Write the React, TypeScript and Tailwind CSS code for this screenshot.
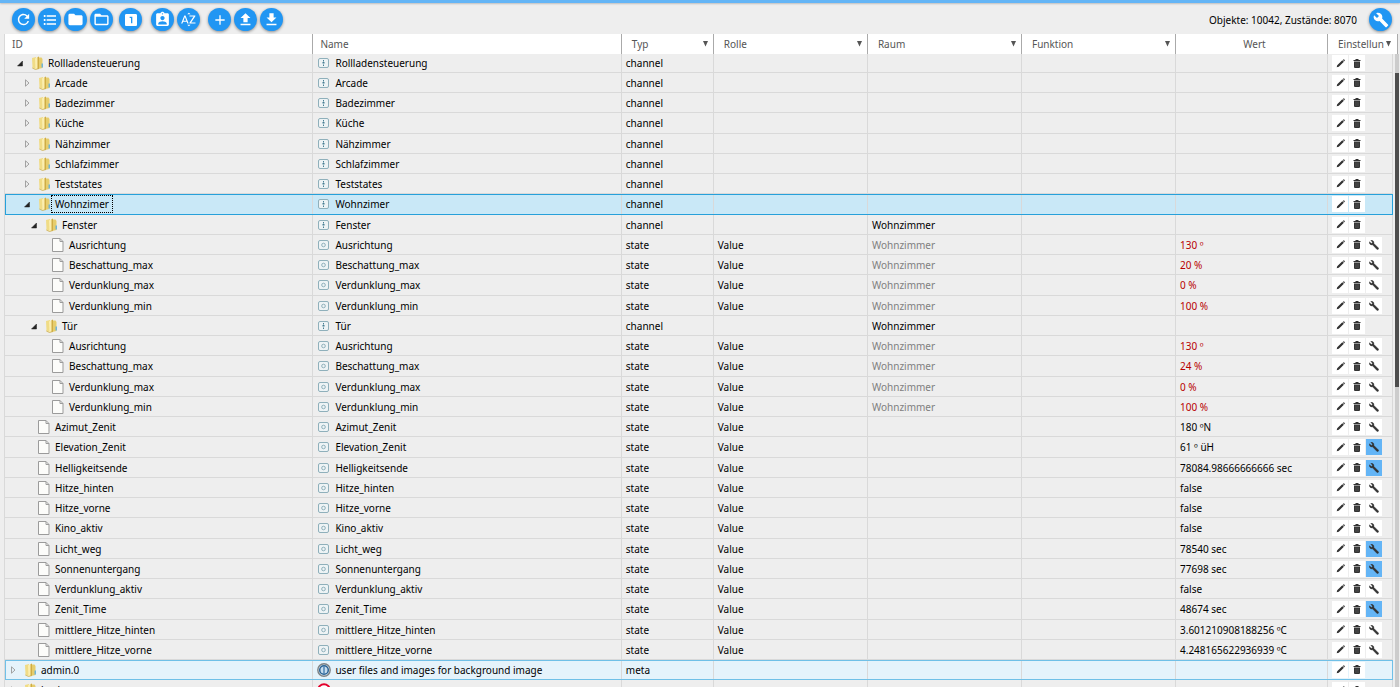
import React from "react";
import {
  MdRefresh, MdFormatListBulleted, MdFolder, MdFolderOpen, MdLooksOne, MdAssignmentInd,
  MdSortByAlpha, MdAdd, MdUpload, MdDownload, MdBuild,
} from "react-icons/md";

type Kind = "channel" | "state" | "meta";
type Row = {
  id: string;
  depth: number;
  kind: Kind;
  open?: boolean;
  folder?: boolean;
  name?: string;
  room?: string;
  value?: string;
  red?: boolean;
  custom?: boolean;
  selected?: boolean;
  hover?: boolean;
};

const channel = (id: string, depth: number, extra: Partial<Row> = {}): Row => ({ id, depth, kind: "channel", folder: true, ...extra });
const state = (id: string, depth: number, value: string, extra: Partial<Row> = {}): Row => ({ id, depth, kind: "state", value, ...extra });
const windowStates = (shade: string): Row[] => [
  state("Ausrichtung", 4, "130 º", { red: true, room: "Wohnzimmer" }),
  state("Beschattung_max", 4, shade, { red: true, room: "Wohnzimmer" }),
  state("Verdunklung_max", 4, "0 %", { red: true, room: "Wohnzimmer" }),
  state("Verdunklung_min", 4, "100 %", { red: true, room: "Wohnzimmer" }),
];

const rows: Row[] = [
  channel("Rollladensteuerung", 1, { open: true }),
  channel("Arcade", 2),
  channel("Badezimmer", 2),
  channel("Küche", 2),
  channel("Nähzimmer", 2),
  channel("Schlafzimmer", 2),
  channel("Teststates", 2),
  channel("Wohnzimer", 2, { open: true, selected: true }),
  channel("Fenster", 3, { open: true, room: "Wohnzimmer" }),
  ...windowStates("20 %"),
  channel("Tür", 3, { open: true, room: "Wohnzimmer" }),
  ...windowStates("24 %"),
  state("Azimut_Zenit", 2, "180 ºN"),
  state("Elevation_Zenit", 2, "61 º üH", { custom: true }),
  state("Helligkeitsende", 2, "78084.98666666666 sec", { custom: true }),
  state("Hitze_hinten", 2, "false"),
  state("Hitze_vorne", 2, "false"),
  state("Kino_aktiv", 2, "false"),
  state("Licht_weg", 2, "78540 sec", { custom: true }),
  state("Sonnenuntergang", 2, "77698 sec", { custom: true }),
  state("Verdunklung_aktiv", 2, "false"),
  state("Zenit_Time", 2, "48674 sec", { custom: true }),
  state("mittlere_Hitze_hinten", 2, "3.601210908188256 ºC"),
  state("mittlere_Hitze_vorne", 2, "4.248165622936939 ºC"),
  { id: "admin.0", depth: 0, kind: "meta", folder: true, name: "user files and images for background image", hover: true },
];

const indent = ["pl-[3px]", "pl-[10px]", "pl-[17px]", "pl-[24px]", "pl-[31px]"];

function FolderIcon() {
  return (
    <svg width="13" height="14" viewBox="0 0 13 14" className="shrink-0" aria-hidden="true">
      <path d="M1 2 5 1v12L1.500 12Z" fill="#f0dc86" />
      <path d="M7 1.500 10.500 1.500 11.500 3v9L7 13Z" fill="#e6cd6c" />
      <path d="M10.500 7.500h1.500v4h-1.500z" fill="#6fb4d8" />
      <path d="M4 2.500 8 .5v12L4.500 13.600Z" fill="#fbeeb0" />
      <path d="M6.500 1.300 8 .5v12L6.500 13Z" fill="#cfac45" />
      <path d="M1.300 12 4.500 13.500 8 12.500" fill="none" stroke="#c9a73e" strokeWidth=".7" />
    </svg>
  );
}

function FileIcon() {
  return (
    <svg width="12" height="14" viewBox="0 0 12 14" className="shrink-0" aria-hidden="true">
      <path d="M.5 .5h7.500l3 3v10H.5Z" fill="#fcfcfa" stroke="#9b9b9b" />
      <path d="M8 .5v3h3" fill="none" stroke="#9b9b9b" />
    </svg>
  );
}

function KindIcon({ kind }: { kind: Kind }) {
  if (kind === "meta") {
    return (
      <svg width="14" height="14" viewBox="0 0 14 14" className="shrink-0" aria-hidden="true">
        <circle cx="7" cy="7" r="6.200" fill="#d3e2ee" stroke="#7d8386" strokeWidth="1.400" />
        <circle cx="7" cy="7" r="4.300" fill="#c5dcee" stroke="#2a6394" strokeWidth="1.500" />
        <path d="M7 3.500v7" stroke="#2f6fa6" strokeWidth="1.200" />
      </svg>
    );
  }
  return (
    <svg width="12" height="12" viewBox="0 0 12 12" className="mx-px shrink-0" aria-hidden="true">
      <rect x=".5" y="1.500" width="10" height="9" rx="1.500" fill="#edf3f5" stroke="#8fb0bb" />
      {kind === "channel" ? (
        <g fill="#457d92">
          <path d="M5 3h1v1.500H5zM4.500 5h2v1.500h-2zM5 7.500h1v1.500H5z" />
        </g>
      ) : (
        <circle cx="5.500" cy="6" r="1.800" fill="none" stroke="#8fb0bb" />
      )}
    </svg>
  );
}

function Arrow({ row }: { row: Row }) {
  if (!row.folder) return <span className="w-[14px] shrink-0" />;
  return (
    <button type="button" aria-label={row.open ? "Zuklappen" : "Aufklappen"} className="flex w-[14px] shrink-0 pl-[2px]">
      <svg width="7" height="8" viewBox="0 0 7 8" aria-hidden="true">
        {row.open ? (
          <path d="M5.500 2V7H.5Z" fill="#222" stroke="#222" strokeWidth=".5" />
        ) : (
          <path d="M1.500 .8 5 4 1.500 7.200Z" fill="none" stroke="#999" strokeWidth=".9" />
        )}
      </svg>
    </button>
  );
}

function PencilIcon() {
  return (
    <svg width="9" height="9" viewBox="0 0 9 9" aria-hidden="true">
      <path d="M.7 8.300 1.200 6.200 6.300 1.300 7.900 2.800 2.800 7.800ZM6.800 .9 7.400 .4Q8 .2 8.500 .7 9 1.300 8.700 1.900L8.300 2.300Z" fill="#333" />
    </svg>
  );
}

function TrashIcon() {
  return (
    <svg width="8" height="9" viewBox="0 0 8 9" aria-hidden="true">
      <path d="M2.500 0h3v1h2v1h-7V1h2ZM1 2.500h6V8q0 1-1 1H2Q1 9 1 8Z" fill="#333" />
      <path d="M3 3.500v4.500M5 3.500v4.500" stroke="#777" strokeWidth=".5" />
    </svg>
  );
}

function WrenchIcon() {
  return (
    <svg width="10" height="10" viewBox="0 0 10 10" aria-hidden="true">
      <path d="M1.800 .4 3.600 2.200 2.300 3.500 .5 1.800C0 3.400 1.300 5.300 3.500 4.800L7.800 9.300Q8.800 9.900 9.500 9 9.900 8.300 9.200 7.700L4.900 3.400C5.300 1.300 3.600-.1 1.800 .4Z" fill="#333" stroke="#333" strokeWidth=".4" />
    </svg>
  );
}

function Actions({ row }: { row: Row }) {
  const base = "flex h-4 w-4 items-center justify-center";
  return (
    <div className="flex gap-px pl-1">
      <button type="button" aria-label="Bearbeiten" className={base + " bg-white"}><PencilIcon /></button>
      <button type="button" aria-label="Löschen" className={base + " bg-white"}><TrashIcon /></button>
      {row.kind === "state" && (
        <button type="button" aria-label="Einstellungen" className={base + (row.custom ? " bg-[#64b5f6]" : " bg-white")}><WrenchIcon /></button>
      )}
    </div>
  );
}

function TreeRow({ row }: { row: Row }) {
  const tone = row.selected
    ? "bg-[#c9e8f7] outline outline-1 outline-[#26a0da]"
    : row.hover
      ? "bg-[#e5f3fb] outline outline-1 outline-[#70c0e7]"
      : "";
  return (
    <tr className={"h-5 first:h-[19px] nth-[4n]:h-[21px] -outline-offset-1 [&>td]:border-r [&>td]:border-b [&>td]:border-[#d9d9d9] [&>td]:p-0 [&>td]:whitespace-nowrap " + tone}>
      <td>
        <div className={"flex items-center " + indent[row.depth]}>
          <Arrow row={row} />
          <span className="flex w-4 shrink-0 justify-center">{row.folder ? <FolderIcon /> : <FileIcon />}</span>
          <span className={"px-[3px] leading-4 " + (row.selected ? "-my-px outline outline-1 outline-dotted outline-black" : "")}>{row.id}</span>
        </div>
      </td>
      <td>
        <div className="flex items-center gap-1 pl-1">
          <KindIcon kind={row.kind} />
          <span>{row.name ?? row.id}</span>
        </div>
      </td>
      <td><span className="pl-1">{row.kind}</span></td>
      <td><span className="pl-1">{row.kind === "state" ? "Value" : ""}</span></td>
      <td><span className={"pl-1 " + (row.kind === "state" ? "text-[#808080]" : "")}>{row.room}</span></td>
      <td />
      <td><span className={"pl-1 " + (row.red ? "text-[#b80000]" : "")}>{row.value}</span></td>
      <td><Actions row={row} /></td>
    </tr>
  );
}

const round = "flex h-[23px] w-[23px] items-center justify-center rounded-full bg-[#2196f3] text-white shadow-[0_1px_3px_rgba(0,0,0,0.4)]";

function Tool({ label, children }: { label: string; children: React.ReactNode }) {
  return <button type="button" aria-label={label} className={round}>{children}</button>;
}

function Filter({ label }: { label: string }) {
  return (
    <button type="button" className="flex w-full items-center justify-between pr-1 pl-[10px]">
      <span>{label}</span>
      <svg width="7" height="6" viewBox="0 0 7 6" aria-hidden="true"><path d="M1 0h5L3.500 5.500Z" fill="#555" /></svg>
    </button>
  );
}

export default function App() {
  return (
    <div className="flex h-screen flex-col overflow-hidden bg-[#eee] font-['Noto_Sans',sans-serif] text-[10px] leading-4 text-black">
      <div className="h-[3px] shrink-0 bg-[#64b5f6] shadow-[0_1px_2px_rgba(0,0,0,0.2)]" />
      <header className="flex h-[31px] shrink-0 items-center justify-between pt-0.5 pr-2 pl-3">
        <div className="flex gap-[6px]">
          <div className="flex gap-[3px]">
            <Tool label="Aktualisieren"><MdRefresh size={17} /></Tool>
            <Tool label="Liste"><MdFormatListBulleted size={16} /></Tool>
            <Tool label="Alle zuklappen"><MdFolder size={17} /></Tool>
            <Tool label="Alle aufklappen"><MdFolderOpen size={17} /></Tool>
          </div>
          <Tool label="Eine Ebene"><MdLooksOne size={16} /></Tool>
          <div className="flex gap-[3px] pl-[3px]">
            <Tool label="Expertenmodus"><MdAssignmentInd size={17} /></Tool>
            <Tool label="Sortieren"><MdSortByAlpha size={17} /></Tool>
          </div>
          <div className="flex gap-[3px] pl-[2px]">
            <Tool label="Hinzufügen"><MdAdd size={16} /></Tool>
            <Tool label="Hochladen"><MdUpload size={17} /></Tool>
            <Tool label="Herunterladen"><MdDownload size={17} /></Tool>
          </div>
        </div>
        <div className="flex items-center gap-3">
          <span>Objekte: 10042, Zustände: 8070</span>
          <Tool label="Konfiguration"><MdBuild size={16} /></Tool>
        </div>
      </header>
      <main className="flex min-h-0 flex-1 overflow-hidden pr-px pl-1">
        <div className="min-w-0 flex-1 overflow-hidden">
          <table className="w-full table-fixed border-separate border-spacing-0 border-l border-[#d9d9d9]">
            <colgroup>
              <col />
              <col />
              <col className="w-[92px]" />
              <col className="w-[11.1%]" />
              <col className="w-[11.1%]" />
              <col className="w-[11.1%]" />
              <col className="w-[152px]" />
              <col className="w-[65px]" />
            </colgroup>
            <thead>
              <tr className="h-5 bg-white text-left text-[#555] [&>th]:border-r [&>th]:border-[#aaa] [&>th]:p-0 [&>th]:font-normal [&>th:last-child]:border-r-0">
                <th><span className="pl-[7px]">ID</span></th>
                <th><span className="pl-[7px]">Name</span></th>
                <th><Filter label="Typ" /></th>
                <th><Filter label="Rolle" /></th>
                <th><Filter label="Raum" /></th>
                <th><Filter label="Funktion" /></th>
                <th><div className="pl-[6px] text-center">Wert</div></th>
                <th className="[&>button]:pr-px"><Filter label="Einstellun" /></th>
              </tr>
            </thead>
            <tbody>
              {rows.map((row, i) => <TreeRow key={i} row={row} />)}
              <tr className="h-5 [&>td]:border-r [&>td]:border-[#d9d9d9] [&>td]:p-0">
                <td>
                  <div className="flex items-center pl-[3px]">
                    <Arrow row={rows[1]} />
                    <span className="flex w-4 justify-center"><FolderIcon /></span>
                    <span className="px-[3px]">backup</span>
                  </div>
                </td>
                <td>
                  <svg width="14" height="14" viewBox="0 0 14 14" className="ml-1" aria-hidden="true"><circle cx="7" cy="7" r="5.800" fill="#fff" stroke="#e4002b" strokeWidth="2" /></svg>
                </td>
                <td /><td /><td /><td /><td />
                <td><Actions row={rows[1]} /></td>
              </tr>
            </tbody>
          </table>
        </div>
        <div className="flex w-[6px] shrink-0 flex-col">
          <div className="mr-px h-5 border-r border-[#aaa] bg-white" />
          <div className="ml-[2px] h-[19px] bg-[#ccc]" />
          <div className="ml-[2px] h-[314px] bg-[#4d4d4d]" />
          <div className="ml-[2px] flex-1 bg-[#ccc]" />
        </div>
      </main>
    </div>
  );
}
